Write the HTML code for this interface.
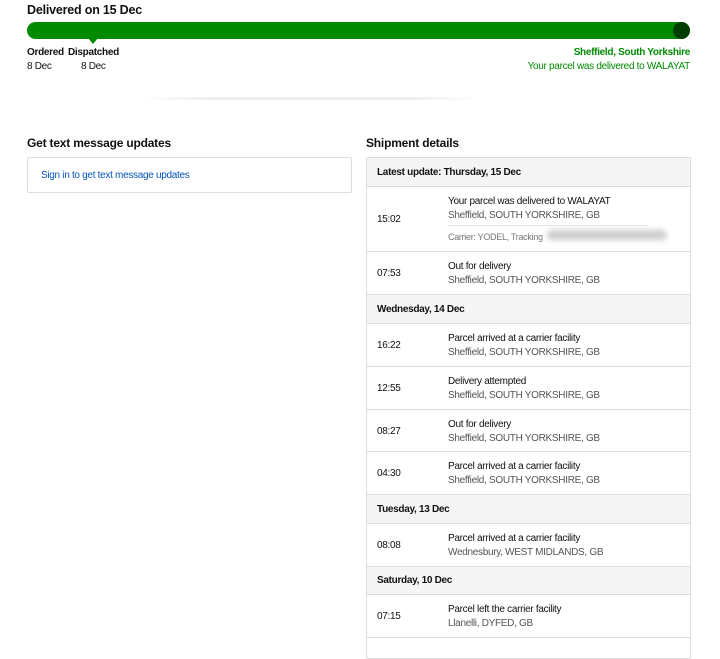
<!DOCTYPE html><html><head><style>
body{margin:0;width:720px;height:641px;overflow:hidden;background:#fff;font-family:"Liberation Sans",Arial,sans-serif;color:#111;font-size:10px;letter-spacing:-0.3px;position:relative}
.a{position:absolute}
.g{color:#008a00}
.row{position:absolute;left:0;right:0;border-top:1px solid #ddd}
.hd{background:#f5f5f5;font-weight:bold}
.t{position:absolute;left:10px}
.d{position:absolute;left:81px;line-height:14px}
.d span{color:#555}
</style></head><body>
<div class="a" style="left:27px;top:3px;font-size:12.5px;font-weight:bold;letter-spacing:-0.2px">Delivered on 15 Dec</div>
<div class="a" style="left:27px;top:22px;width:663px;height:17px;background:#008a00;border-radius:9px"></div>
<div class="a" style="left:673px;top:22px;width:17px;height:17px;background:#003d00;border-radius:50%"></div>
<div class="a" style="left:88px;top:38px;width:0;height:0;border-left:5px solid transparent;border-right:5px solid transparent;border-top:6px solid #008a00"></div>
<div class="a" style="left:27px;top:47px;font-weight:bold">Ordered</div>
<div class="a" style="left:68px;top:47px;font-weight:bold">Dispatched</div>
<div class="a" style="left:27px;top:61px">8 Dec</div>
<div class="a" style="left:81px;top:61px">8 Dec</div>
<div class="a g" style="right:30px;top:47px;font-weight:bold">Sheffield, South Yorkshire</div>
<div class="a g" style="right:30px;top:61px">Your parcel was delivered to WALAYAT</div>
<div class="a" style="left:140px;top:97px;width:340px;height:3px;background:linear-gradient(90deg,#fff,#eee 20%,#eee 80%,#fff)"></div>
<div class="a" style="left:27px;top:136px;font-size:12px;font-weight:bold;letter-spacing:-0.2px">Get text message updates</div>
<div class="a" style="left:27px;top:157px;width:323px;height:34px;border:1px solid #ddd;border-radius:2px"><div style="position:absolute;left:13px;top:12px;color:#0654ba">Sign in to get text message updates</div></div>
<div class="a" style="left:366px;top:136px;font-size:12px;font-weight:bold;letter-spacing:-0.2px">Shipment details</div>
<div class="a" style="left:366px;top:157px;width:323px;height:500px;border:1px solid #ddd;border-radius:2px;overflow:hidden">
<div class="row hd" style="top:-1px;height:29px"><div class="t" style="top:9px">Latest update: Thursday, 15 Dec</div></div>
<div class="row" style="top:28px;height:65px"><div class="t" style="top:27px">15:02</div><div class="d" style="top:8px">Your parcel was delivered to WALAYAT<br><span>Sheffield, SOUTH YORKSHIRE, GB</span></div><div class="a" style="left:81px;top:38px;width:200px;border-top:1px solid #e5e5e5"></div><div class="a" style="left:81px;top:45px;font-size:9px;color:#777">Carrier: YODEL, Tracking</div><div class="a" style="left:180px;top:43px;width:120px;height:10px;background:#ccc;border-radius:6px;filter:blur(3px)"></div></div>
<div class="row" style="top:93px;height:43px"><div class="t" style="top:16px">07:53</div><div class="d" style="top:8px">Out for delivery<br><span>Sheffield, SOUTH YORKSHIRE, GB</span></div></div>
<div class="row hd" style="top:136px;height:29px"><div class="t" style="top:9px">Wednesday, 14 Dec</div></div>
<div class="row" style="top:165px;height:43px"><div class="t" style="top:16px">16:22</div><div class="d" style="top:8px">Parcel arrived at a carrier facility<br><span>Sheffield, SOUTH YORKSHIRE, GB</span></div></div>
<div class="row" style="top:208px;height:43px"><div class="t" style="top:16px">12:55</div><div class="d" style="top:8px">Delivery attempted<br><span>Sheffield, SOUTH YORKSHIRE, GB</span></div></div>
<div class="row" style="top:251px;height:42px"><div class="t" style="top:16px">08:27</div><div class="d" style="top:8px">Out for delivery<br><span>Sheffield, SOUTH YORKSHIRE, GB</span></div></div>
<div class="row" style="top:293px;height:43px"><div class="t" style="top:16px">04:30</div><div class="d" style="top:8px">Parcel arrived at a carrier facility<br><span>Sheffield, SOUTH YORKSHIRE, GB</span></div></div>
<div class="row hd" style="top:336px;height:29px"><div class="t" style="top:9px">Tuesday, 13 Dec</div></div>
<div class="row" style="top:365px;height:43px"><div class="t" style="top:16px">08:08</div><div class="d" style="top:8px">Parcel arrived at a carrier facility<br><span>Wednesbury, WEST MIDLANDS, GB</span></div></div>
<div class="row hd" style="top:408px;height:28px"><div class="t" style="top:8px">Saturday, 10 Dec</div></div>
<div class="row" style="top:436px;height:43px"><div class="t" style="top:16px">07:15</div><div class="d" style="top:8px">Parcel left the carrier facility<br><span>Llanelli, DYFED, GB</span></div></div>
<div class="row" style="top:479px;height:43px"></div>
</div>
</body></html>
